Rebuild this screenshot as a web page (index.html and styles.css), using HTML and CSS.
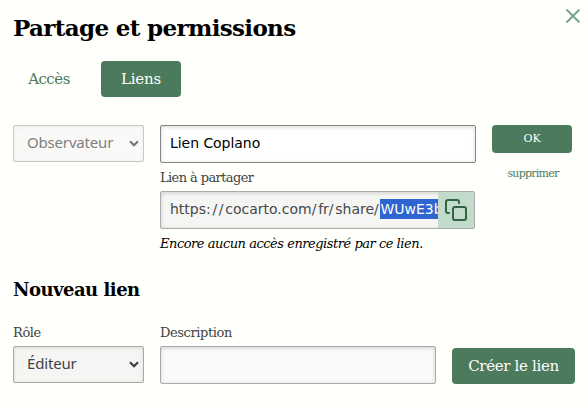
FILE: index.html
```
<!DOCTYPE html>
<html lang="fr">
<head>
<meta charset="utf-8">
<title>Partage et permissions</title>
<link rel="stylesheet" href="styles.css">
</head>
<body>
<main class="dialog">
  <button class="close" aria-label="Fermer"><svg width="14" height="14" viewBox="0 0 14 14"><path d="M.5.5l13 13M13.5.5l-13 13"/></svg></button>
  <h1>Partage et permissions</h1>
  <nav class="tabs">
    <a class="tab">Accès</a>
    <a class="tab active">Liens</a>
  </nav>
  <section class="link-row">
    <div class="select disabled"><span>Observateur</span><svg width="10" height="7" viewBox="0 0 10 7"><path d="M1 1.2l4 4 4-4"/></svg></div>
    <div class="details">
      <div class="input name">Lien Coplano</div>
      <div class="label">Lien à partager</div>
      <div class="input share">
        <div class="url">https<span class="sep">://</span>cocarto.com<span class="sep">/</span>fr<span class="sep">/</span>share<span class="sep">/</span><mark>WUwE3b</mark></div>
        <button class="copy" aria-label="Copier"><svg width="24" height="24" viewBox="0 0 24 24"><rect x="9" y="9" width="13" height="13" rx="2"/><path d="M5 15H4a2 2 0 0 1-2-2V4a2 2 0 0 1 2-2h9a2 2 0 0 1 2 2v1"/></svg></button>
      </div>
      <p class="status">Encore aucun accès enregistré par ce lien.</p>
    </div>
    <div class="actions">
      <button class="ok">OK</button>
      <a class="remove">supprimer</a>
    </div>
  </section>
  <h2>Nouveau lien</h2>
  <section class="new-row">
    <div class="role"><div class="label">Rôle</div><div class="select"><span>Éditeur</span><svg width="10" height="7" viewBox="0 0 10 7"><path d="M1 1.2l4 4 4-4"/></svg></div></div>
    <div class="description"><div class="label desc-label">Description</div><div class="input"></div></div>
    <button class="create">Créer le lien</button>
  </section>
</main>
</body>
</html>
```
FILE: styles.css
```
* { box-sizing: border-box; }
body { margin: 0; background: #fffffb; color: #000; font-family: "DejaVu Serif", serif; }
button { border: 0; margin: 0; padding: 0; font: inherit; background: none; }
svg { display: block; fill: none; flex: none; }
.dialog { position: relative; width: 587px; height: 410px; padding: 13px 12px 0 13px; overflow: hidden; white-space: nowrap; }
.close { position: absolute; left: 566px; top: 9px; }
.close path { stroke: #78a58a; stroke-width: 2; }
h1 { margin: 0; height: 48px; line-height: 30px; font-size: 23px; letter-spacing: -.65px; }
.tabs { display: flex; gap: 16px; height: 64px; }
.tab { width: 72px; height: 36px; line-height: 36px; border-radius: 4px; font-size: 15px; letter-spacing: -.5px; text-align: center; color: #4c7a5c; }
.tab.active { width: 80px; background: #4c7a5c; color: #fff; letter-spacing: -.2px; }
.link-row { display: grid; grid-template-columns: 131px 316px 80px; column-gap: 16px; height: 153px; align-items: start; }
.select { display: flex; align-items: center; justify-content: space-between; width: 131px; height: 37px; padding: 0 4px 3px 13px; border: 1px solid #a9aaa6; border-radius: 2px; background: #f5f5f4; box-shadow: inset 0 1px 4px #0000001c; font-family: "Noto Sans", sans-serif; font-size: 15px; letter-spacing: -.18px; color: #424242; }
.select svg { margin-top: 3px; }
.select path { stroke: #3d3d3d; stroke-width: 2.2; }
.select.disabled { border-color: #c7c8c5; background: #f9f9f7; color: #808080; box-shadow: inset 0 1px 4px #0000000e; }
.select.disabled path { stroke: #777; }
.input { height: 38px; border: 1px solid #aaa; border-radius: 2px; background: #fafafa; box-shadow: inset 0 1px 4px #0000002a; font-family: "DejaVu Sans", sans-serif; font-size: 14px; }
.name { padding-left: 9px; line-height: 35px; letter-spacing: -.05px; border-color: #858585; background: #fff; }
.label { height: 28px; line-height: 30px; font-size: 13px; letter-spacing: -.6px; color: #424242; }
.share { display: flex; width: 315px; background: #f5f5f4; color: #484848; overflow: hidden; }
.url { width: 277px; padding-left: 9px; line-height: 34px; overflow: hidden; }
.sep { letter-spacing: 1.68px; }
mark { display: inline-block; height: 20px; line-height: 20px; background: #2f65d0; color: #fff; }
.copy { width: 36px; height: 36px; padding: 6px; background: #c3dbcb; }
.copy svg { stroke: #326342; stroke-width: 2; stroke-linecap: round; stroke-linejoin: round; }
.status { margin: 0; height: 28px; line-height: 29px; font-size: 13px; font-style: italic; letter-spacing: -.47px; }
.actions { display: flex; flex-direction: column; align-items: center; }
.ok { width: 80px; height: 28px; border-radius: 4px; background: #4c7a5c; color: #fff; font-size: 11px; line-height: 28px; }
.remove { margin: 11px 0 0 2px; line-height: 20px; font-size: 11px; letter-spacing: -.75px; color: #4c7a5c; }
h2 { margin: 0; height: 41px; line-height: 24px; font-size: 18px; letter-spacing: -.5px; }
.new-row { display: grid; grid-template-columns: 131px 276px 123px; column-gap: 16px; align-items: end; }
.new-row .label { height: 27px; line-height: 28px; letter-spacing: -.4px; }
.role { height: 65px; }
.create { height: 36px; border-radius: 4px; background: #4c7a5c; color: #fff; font-size: 15px; letter-spacing: -.33px; }
```
